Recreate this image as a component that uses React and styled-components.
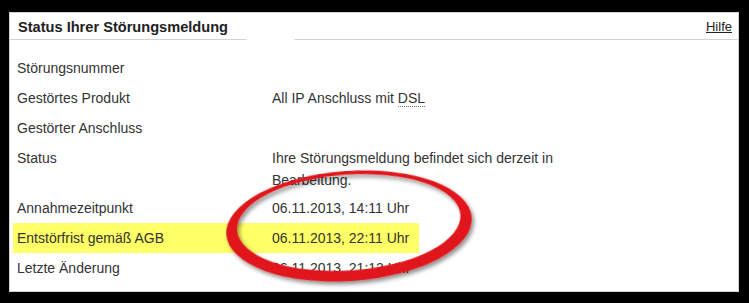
import React from 'react';
import styled, { createGlobalStyle } from 'styled-components';

const GlobalStyle = createGlobalStyle`
  html, body {
    margin: 0;
    padding: 0;
    background: #000;
  }
`;

const Page = styled.div`
  position: relative;
  width: 749px;
  height: 303px;
  box-sizing: border-box;
  padding: 12px 10px 11px 9px;
  font-family: "Liberation Sans", Arial, sans-serif;
`;

const Panel = styled.div`
  box-sizing: border-box;
  height: 280px;
  background: #fff;
  border: 1px solid #d3d3d3;
  display: flex;
  flex-direction: column;
`;

const Header = styled.div`
  display: flex;
  height: 27px;
  color: #222;
`;

const HeaderCell = styled.div`
  display: flex;
  align-items: center;
  box-sizing: border-box;
  border-bottom: ${(p) => (p.gap ? '1px solid transparent' : '1px solid #d3d3d3')};
  flex: ${(p) => p.flex};
  justify-content: ${(p) => (p.right ? 'flex-end' : 'flex-start')};
  padding: ${(p) => p.pad || '0'};
`;

const Title = styled.span`
  font-size: 14.6px;
  font-weight: bold;
  padding-top: 2px;
`;

const HelpLink = styled.a`
  font-size: 13px;
  color: #222;
  text-decoration: underline;
  padding-top: 1px;
`;

const Body = styled.div`
  padding: 13px 0 0 3px;
`;

const Row = styled.div`
  display: grid;
  grid-template-columns: 255px auto;
  width: ${(p) => (p.highlight ? 'fit-content' : 'auto')};
  background: ${(p) => (p.highlight ? '#ffff66' : 'transparent')};
  padding: ${(p) => (p.tall ? '4px 10px 2px 4px' : '4px 10px 4px 4px')};
  font-size: 14px;
  line-height: 22px;
  color: #333;
`;

const Value = styled.div`
  max-width: 300px;
`;

const Abbr = styled.span`
  border-bottom: 1px dotted #777;
  line-height: 14px;
`;

const Marker = styled.svg`
  position: absolute;
  left: 0;
  top: 0;
  pointer-events: none;
`;

const rows = [
  { label: 'Störungsnummer', value: '' },
  { label: 'Gestörtes Produkt', value: <>All IP Anschluss mit <Abbr>DSL</Abbr></> },
  { label: 'Gestörter Anschluss', value: '' },
  { label: 'Status', value: 'Ihre Störungsmeldung befindet sich derzeit in Bearbeitung.', tall: true },
  { label: 'Annahmezeitpunkt', value: '06.11.2013, 14:11 Uhr' },
  { label: 'Entstörfrist gemäß AGB', value: '06.11.2013, 22:11 Uhr', highlight: true },
  { label: 'Letzte Änderung', value: '06.11.2013, 21:13 Uhr' },
];

const ellipse = (cx, cy, rx, ry) =>
  `M${cx - rx},${cy} a${rx},${ry} 0 1,0 ${rx * 2},0 a${rx},${ry} 0 1,0 ${-rx * 2},0 Z`;

const App = () => (
  <Page>
    <GlobalStyle />
    <Panel>
      <Header>
        <HeaderCell flex="0 0 236px" pad="0 0 0 8px">
          <Title>Status Ihrer Störungsmeldung</Title>
        </HeaderCell>
        <HeaderCell gap flex="0 0 48px" />
        <HeaderCell flex="1" right pad="0 6px 0 0">
          <HelpLink href="#">Hilfe</HelpLink>
        </HeaderCell>
      </Header>
      <Body>
        {rows.map((r) => (
          <Row key={r.label} highlight={r.highlight} tall={r.tall}>
            <div>{r.label}</div>
            <Value>{r.value}</Value>
          </Row>
        ))}
      </Body>
    </Panel>
    <Marker width="749" height="303" viewBox="0 0 749 303">
      <defs>
        <filter id="shadow" x="-10%" y="-20%" width="130%" height="150%">
          <feDropShadow dx="2" dy="3" stdDeviation="2" floodColor="#000" floodOpacity="0.45" />
        </filter>
      </defs>
      <g transform="rotate(-4 349 226)" filter="url(#shadow)">
        <path
          d={`${ellipse(349, 226, 123, 55)} ${ellipse(349, 222.5, 112, 48)}`}
          fill="#e0161a"
          fillRule="evenodd"
        />
      </g>
    </Marker>
  </Page>
);

export default App;
